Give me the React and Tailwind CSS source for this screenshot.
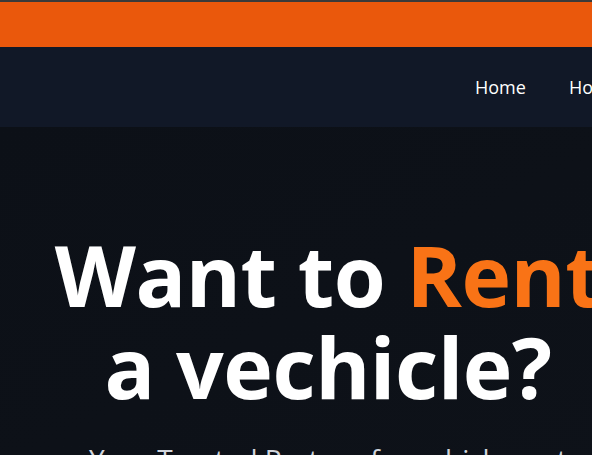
import React from 'react'

const navItems = ['Home', 'How it works', 'Vehicles', 'Contact']

const App = () => {
  return (
    <div className="h-screen w-full overflow-hidden bg-[#0d1118]" style={{ fontFamily: '"Open Sans", "Noto Sans", sans-serif' }}>
      <div className="w-[656px]">
        <div className="h-[2px] bg-[#3a3a3a]" />
        <div className="h-[45px] bg-[#ea580c]" />

        <nav className="flex h-20 items-center bg-[#111827] pl-[475px]">
          <ul className="flex gap-[43px] whitespace-nowrap text-[18px] text-white">
            {navItems.map((item) => (
              <li key={item}>{item}</li>
            ))}
          </ul>
        </nav>

        <section className="bg-gradient-to-br from-[#0c1017] to-[#0e1219] pt-[102px] text-center">
          <h1 className="text-[84px] font-bold leading-[92px] tracking-[-0.5px] text-white">
            Want to <span className="text-[#f97316]">Rent</span>
            <br />a vechicle?
          </h1>
          <p className="mt-[25px] px-8 text-[28px] text-gray-300">
            Your Trusted Partner for vehicle rent
          </p>
        </section>
      </div>
    </div>
  )
}

export default App
